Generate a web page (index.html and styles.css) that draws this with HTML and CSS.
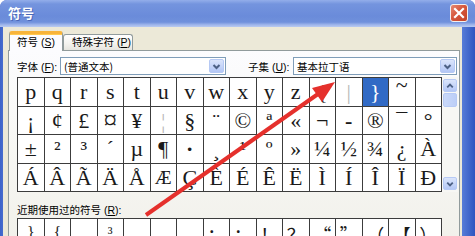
FILE: index.html
```html
<!DOCTYPE html>
<html>
<head>
<meta charset="utf-8">
<title>符号</title>
<link rel="stylesheet" href="styles.css">
</head>
<body>
<div class="window">
  <div class="titlebar">
    <span class="title">符号</span>
    <span class="close"><svg width="12" height="12" viewBox="0 0 12 12"><path d="M2 2 L10 10 M10 2 L2 10" stroke="#fff" stroke-width="2.2" stroke-linecap="square"/></svg></span>
  </div>
  <div class="client">
    <div class="tabs">
      <div class="tab active">符号 (<u>S</u>)</div>
      <div class="tab">特殊字符 (<u>P</u>)</div>
    </div>
    <div class="panel">
      <div class="fontrow">
        <span class="lbl">字体 (<u>F</u>):</span>
        <div class="select sel-font"><span class="val">(普通文本)</span><span class="drop"><svg width="13" height="13" viewBox="0 0 13 13"><path d="M3.5 5 L6.5 8 L9.5 5" fill="none" stroke="#4d6185" stroke-width="2"/></svg></span></div>
        <span class="lbl lbl-sub">子集 (<u>U</u>):</span>
        <div class="select sel-sub"><span class="val">基本拉丁语</span><span class="drop"><svg width="13" height="13" viewBox="0 0 13 13"><path d="M3.5 5 L6.5 8 L9.5 5" fill="none" stroke="#4d6185" stroke-width="2"/></svg></span></div>
      </div>
      <div class="charrow">
        <div class="grid chars">
          <div class="c">p</div><div class="c">q</div><div class="c">r</div><div class="c">s</div><div class="c">t</div><div class="c">u</div><div class="c">v</div><div class="c">w</div><div class="c">x</div><div class="c">y</div><div class="c">z</div><div class="c">{</div><div class="c faint">|</div><div class="c sel">}</div><div class="c high">~</div><div class="c"></div>
          <div class="c">¡</div><div class="c">¢</div><div class="c">£</div><div class="c big">¤</div><div class="c">¥</div><div class="c faint">¦</div><div class="c">§</div><div class="c">¨</div><div class="c">©</div><div class="c">ª</div><div class="c">«</div><div class="c">¬</div><div class="c bold">-</div><div class="c">®</div><div class="c">¯</div><div class="c">°</div>
          <div class="c">±</div><div class="c">²</div><div class="c">³</div><div class="c">´</div><div class="c">µ</div><div class="c">¶</div><div class="c bold">·</div><div class="c">¸</div><div class="c">¹</div><div class="c">º</div><div class="c">»</div><div class="c">¼</div><div class="c">½</div><div class="c">¾</div><div class="c">¿</div><div class="c">À</div>
          <div class="c">Á</div><div class="c">Â</div><div class="c">Ã</div><div class="c">Ä</div><div class="c">Å</div><div class="c narrow">Æ</div><div class="c">Ç</div><div class="c">È</div><div class="c">É</div><div class="c">Ê</div><div class="c">Ë</div><div class="c">Ì</div><div class="c">Í</div><div class="c">Î</div><div class="c">Ï</div><div class="c">Ð</div>
        </div>
        <div class="vscroll">
          <span class="sbtn"><svg width="13" height="12" viewBox="0 0 13 12"><path d="M3.5 7.5 L6.5 4.5 L9.5 7.5" fill="none" stroke="#4d6185" stroke-width="2"/></svg></span>
          <span class="thumb"></span>
          <span class="track"></span>
          <span class="sbtn"><svg width="13" height="12" viewBox="0 0 13 12"><path d="M3.5 4.5 L6.5 7.5 L9.5 4.5" fill="none" stroke="#4d6185" stroke-width="2"/></svg></span>
        </div>
      </div>
      <div class="recent-label">近期使用过的符号 (<u>R</u>):</div>
      <div class="grid recent">
        <div class="c sm">}</div><div class="c sm">{</div><div class="c"></div><div class="c sm">³</div><div class="c"></div><div class="c"></div><div class="c"></div><div class="c cjk">；</div><div class="c cjk">：</div><div class="c cjk">！</div><div class="c cjk">？</div><div class="c cjk">“</div><div class="c cjk">”</div><div class="c cjk">（</div><div class="c cjk">【</div><div class="c cjk">）</div>
      </div>
    </div>
  </div>
  <svg class="arrow" width="475" height="236" viewBox="0 0 475 236">
    <line x1="146" y1="215" x2="318" y2="94" stroke="#e5302c" stroke-width="4"/>
    <polygon points="335,82 312,88 322,102" fill="#e5302c"/>
  </svg>
</div>
</body>
</html>
```

FILE: styles.css
```css
* { box-sizing: border-box; }
html, body { margin: 0; padding: 0; }
body {
  width: 475px;
  height: 236px;
  overflow: hidden;
  background: #ffffff;
  font-family: "Liberation Sans", "Noto Sans CJK SC", sans-serif;
}
.window {
  position: relative;
  width: 475px;
  height: 236px;
  display: flex;
  flex-direction: column;
  background: linear-gradient(90deg, #3d63c9 0, #5b80da 2%, #5b80da 97%, #2f55c0 100%);
  border-top-right-radius: 7px;
  border-top-left-radius: 7px;
  overflow: hidden;
}
.titlebar {
  height: 27px;
  flex: none;
  display: flex;
  align-items: center;
  justify-content: space-between;
  padding: 0 7px 0 8px;
  background: linear-gradient(180deg, #93aeea 0, #7494de 15%, #6a8bda 60%, #7091dc 82%, #9fb6ec 92%, #b9caf0 100%);
}
.title {
  color: #ffffff;
  font-family: "Noto Sans CJK SC", sans-serif;
  font-weight: bold;
  font-size: 13px;
  line-height: 16px;
  margin-top: -2px;
  text-shadow: 1px 1px 0 #4a68b8;
}
.close {
  width: 18px;
  height: 18px;
  margin-top: -2px;
  border: 1px solid #f4f0ee;
  border-radius: 3px;
  background: linear-gradient(135deg, #e58a74 0, #d6573c 45%, #c44328 100%);
  display: flex;
  align-items: center;
  justify-content: center;
}
.client {
  flex: 1;
  margin: 0 13px 0 3px;
  background: #ece9d8;
  padding: 0 2px 0 5px;
  display: flex;
  flex-direction: column;
}
.tabs {
  height: 23px;
  flex: none;
  display: flex;
  align-items: flex-end;
  padding-left: 1px;
  position: relative;
  z-index: 2;
}
.tab {
  font-family: "Liberation Sans", "Noto Sans CJK SC", sans-serif;
  font-size: 10.5px;
  color: #000;
  height: 16px;
  line-height: 14px;
  padding: 0 0 0 8px;
  white-space: nowrap;
  border: 1px solid #919b9c;
  border-bottom: none;
  border-radius: 3px 3px 0 0;
  background: linear-gradient(180deg, #ffffff 0, #f3f2ee 60%, #e6e5df 100%);
  width: 70px;
}
.tab.active {
  width: 54px;
  height: 20px;
  line-height: 16px;
  margin-bottom: -1px;
  padding-left: 7px;
  background: #fcfcfe;
  border-top: 3px solid #f8b43a;
  box-shadow: inset 0 1px 0 #ffc94f;
}
.tab u, .lbl u, .recent-label u { text-decoration: underline; text-underline-offset: 1px; }
.panel {
  flex: 1;
  border: 1px solid #919b9c;
  border-bottom: none;
  background: linear-gradient(180deg, #fcfcfe 0, #f7f7f3 50%, #f1f0ea 100%);
  padding: 6px 0 0 8px;
  display: flex;
  flex-direction: column;
}
.fontrow {
  height: 18px;
  display: flex;
  align-items: center;
}
.lbl {
  font-size: 10.5px;
  color: #000;
  width: 43px;
  white-space: nowrap;
}
.lbl-sub {
  margin-left: 22px;
  width: 45px;
}
.select {
  height: 18px;
  border: 1px solid #7f9db9;
  background: #ffffff;
  display: flex;
  align-items: center;
  justify-content: space-between;
  padding: 0 1px 0 3px;
  font-size: 10.5px;
  font-family: "Noto Sans CJK SC", sans-serif;
  color: #000;
}
.sel-font { width: 166px; }
.sel-sub { width: 164px; }
.drop {
  width: 15px;
  height: 14px;
  border: 1px solid #b6c9f4;
  border-radius: 2px;
  background: linear-gradient(180deg, #dbe5fb 0, #c3d3f8 60%, #b2c6f5 100%);
  display: flex;
  align-items: center;
  justify-content: center;
}
.charrow {
  margin-top: 2px;
  display: flex;
}
.grid {
  display: grid;
  grid-template-columns: repeat(16, 1fr);
  width: 425px;
  border-top: 1px solid #3c3c3c;
  border-left: 1px solid #3c3c3c;
  background: #ffffff;
}
.chars { grid-auto-rows: 28.5px; }
.c {
  border-right: 1px solid #3c3c3c;
  border-bottom: 1px solid #3c3c3c;
  font-family: "Liberation Serif", serif;
  font-size: 22px;
  line-height: 27px;
  text-align: center;
  color: #1a1a1a;
  overflow: hidden;
}
.c.sel { background: #316ac5; color: #ffffff; }
.c.faint { color: #b8b8b8; }
.c.bold { font-weight: bold; }
.c.high { line-height: 14px; }
.c.big { font-size: 27px; line-height: 27px; }
.c.narrow { font-size: 19px; }
.vscroll {
  width: 16px;
  height: 115px;
  background: #f7f7f4;
  display: flex;
  flex-direction: column;
  align-items: center;
  padding: 2px 0;
}
.sbtn {
  width: 14px;
  height: 13px;
  border: 1px solid #b7caf5;
  border-radius: 2px;
  background: linear-gradient(180deg, #dbe5fb 0, #c3d3f8 60%, #b4c7f5 100%);
  display: flex;
  align-items: center;
  justify-content: center;
}
.thumb {
  width: 14px;
  height: 14px;
  margin-top: 1px;
  border: 1px solid #b7caf5;
  border-radius: 2px;
  background: linear-gradient(90deg, #c9d8f9 0, #bccef7 100%);
}
.track { flex: 1; }
.recent-label {
  margin-top: 12px;
  height: 12px;
  line-height: 12px;
  font-size: 10.5px;
  color: #000;
}
.recent {
  margin-top: 2px;
  grid-auto-rows: 30px;
}
.c.sm { font-size: 16px; line-height: 28px; }
.c.cjk { font-family: "Noto Sans CJK SC", sans-serif; font-size: 18px; line-height: 30px; }
.arrow {
  position: absolute;
  left: 0;
  top: 0;
  pointer-events: none;
}
```
